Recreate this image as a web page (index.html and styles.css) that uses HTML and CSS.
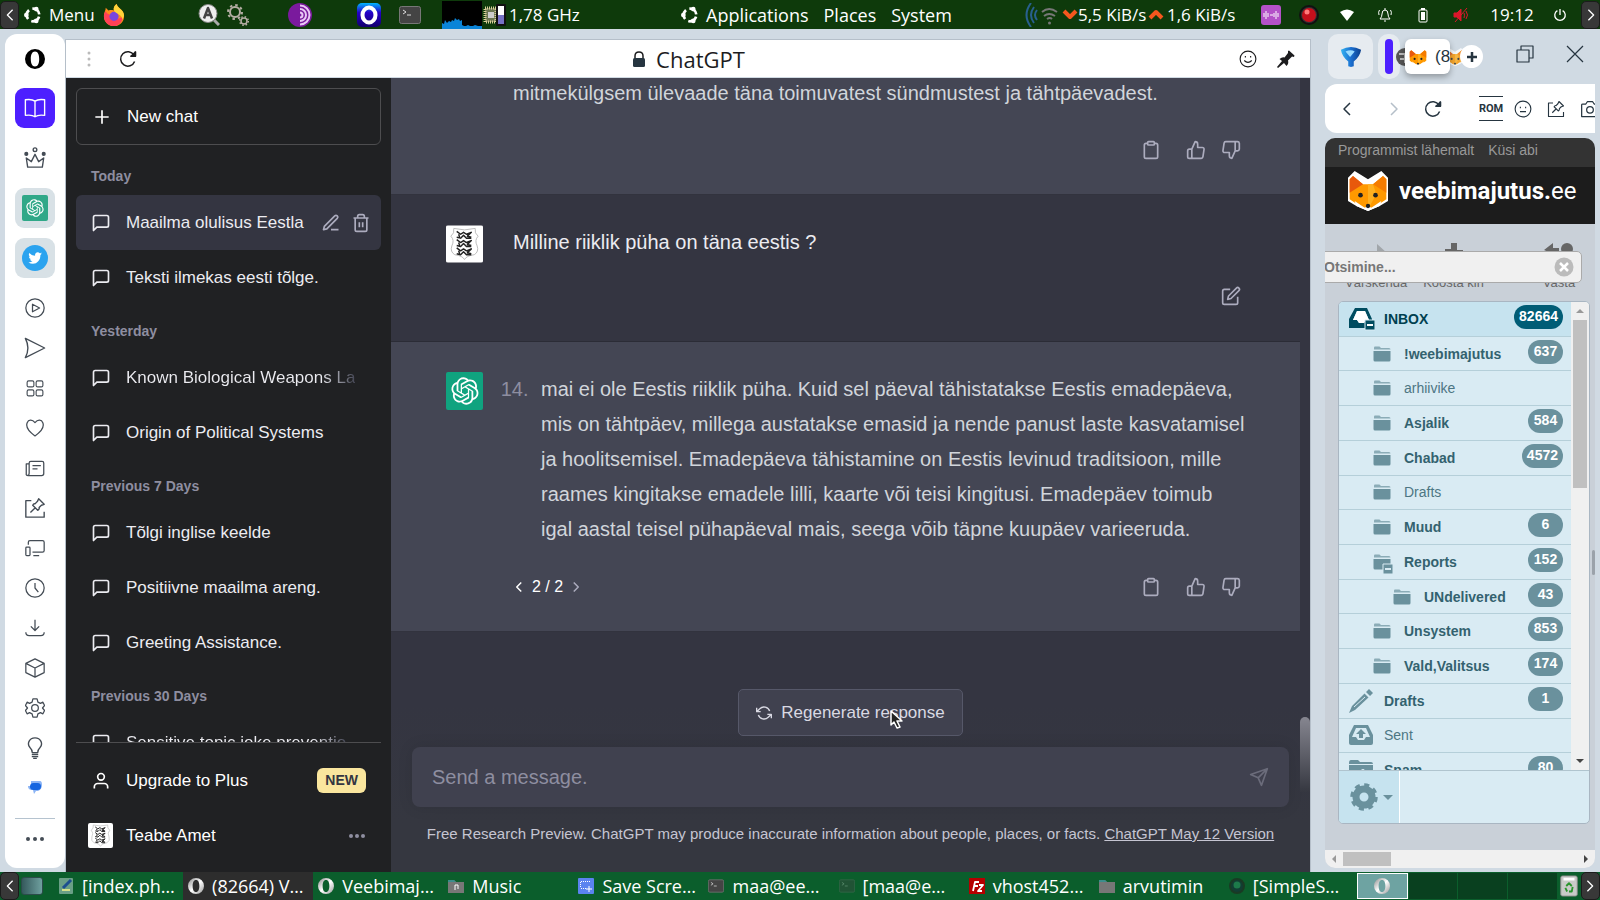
FILE: index.html
```html
<!DOCTYPE html>
<html lang="et">
	<head>
		<meta charset="UTF-8">
		<title>ChatGPT</title>
		<link rel="stylesheet" href="styles.css">
	</head>
	<body>
		<svg class="sprite" aria-hidden="true">
			<symbol id="left" viewBox="0 0 10 16"><path d="M8 2 2 8l6 6"/></symbol>
			<symbol id="right" viewBox="0 0 10 16"><path d="m2 2 6 6-6 6"/></symbol>
			<symbol id="ubuntu" viewBox="0 0 20 20"><circle cx="10" cy="10" r="7" stroke-width="3" stroke-dasharray="10.7 4" stroke-dashoffset="-2"/><g fill="#fff" stroke="none"><circle cx="2.6" cy="10" r="2.6"/><circle cx="13.6" cy="3.4" r="2.6"/><circle cx="13.6" cy="16.6" r="2.6"/></g></symbol>
			<symbol id="chat" viewBox="0 0 24 24"><path d="M21 15a2 2 0 0 1-2 2H7l-4 4V5a2 2 0 0 1 2-2h14a2 2 0 0 1 2 2z"/></symbol>
			<symbol id="clipboard" viewBox="0 0 24 24"><path d="M16 4h2a2 2 0 0 1 2 2v14a2 2 0 0 1-2 2H6a2 2 0 0 1-2-2V6a2 2 0 0 1 2-2h2"/><rect x="8" y="2" width="8" height="4" rx="1"/></symbol>
			<symbol id="up" viewBox="0 0 24 24"><path d="M14 9V5a3 3 0 0 0-3-3l-4 9v11h11.28a2 2 0 0 0 2-1.7l1.38-9a2 2 0 0 0-2-2.3zM7 22H4a2 2 0 0 1-2-2v-7a2 2 0 0 1 2-2h3"/></symbol>
			<symbol id="down" viewBox="0 0 24 24"><path d="M10 15v4a3 3 0 0 0 3 3l4-9V2H5.72a2 2 0 0 0-2 1.7l-1.38 9a2 2 0 0 0 2 2.3zm7-13h2.67A2.31 2.31 0 0 1 22 4v7a2.31 2.31 0 0 1-2.33 2H17"/></symbol>
			<symbol id="reload" viewBox="0 0 18 18"><path d="M15.6 11.5A7.2 7.2 0 1 1 15 5.2M16.4 1.6v4.6h-4.8"/><path d="M16.4 2v4.2H12z" fill="currentColor"/></symbol>
			<symbol id="pinbox" viewBox="0 0 24 24"><path d="M8 4H2v18h20v-6M7 17l5-5M9.5 9 15 14.5c2-1 1.5-3 1.5-3L19 9l3-1-6-6-1.5 3L12 7.5s-1.500-.5-2.500 1.500z"/></symbol>
			<symbol id="folder" viewBox="0 0 18 16"><path d="M1 3c0-2 0-2.500 1.500-2.500h4L8 2h8q1.500 0 1.500 1.500H1z" opacity=".7"/><path d="M.5 5h17v9q0 1.500-1.500 1.500H2Q.5 15.500.5 14z"/></symbol>
			<symbol id="opera" viewBox="0 0 20 20"><path fill-rule="evenodd" d="M10 0a10 10 0 1 0 0 20 10 10 0 0 0 0-20zM10 2.500c3 0 4.200 3.400 4.200 7.500s-1.200 7.500-4.200 7.500S5.800 14.100 5.800 10 7 2.500 10 2.500z"/></symbol>
			<symbol id="fox" viewBox="0 0 24 24"><g stroke="none"><path d="M0 4 4 0l8 5 8-5 4 4v14l-5 3-7 3-7-3-5-3z" fill="#fff"/><path d="M1 5 3 3l6 5h6l6-5 2 2v12l-6 4-5 2-5-2-6-4z" fill="#f90"/><path d="M3 3l6 5-8 5V5z" fill="#e8590c"/><path d="M12 8h3l2 6-5 9z" fill="#ffb020"/><path d="m21 3-6 5 8 5V5z" fill="#f57c00"/><circle cx="7.500" cy="14.500" r="1.400" fill="#222"/><circle cx="16.500" cy="14.500" r="1.400" fill="#222"/><path d="m4 18 6 4 2-1 2 1 6-4-1 3-7 3-7-3z" fill="#fff"/><circle cx="12" cy="21" r="1.300" fill="#222"/></g></symbol>
			<symbol id="shield" viewBox="0 0 38 38"><path d="M0 0h38v38H0z" fill="#fff" stroke="none"/><path d="M8 3q11 3 22 0-1 5 3 8-4 4-1 10 2 6-3 9-8 1-10 5-2-4-10-5-5-3-3-9 3-6-1-10 4-3 3-8z" stroke="#bbb" stroke-width="1"/><g stroke="#222" stroke-width="1.500"><path id="lion" d="m11 6 4 3 3-2 3 2 5-2-4 4 4 1m-15 0 4 1 3-3 3 3 5 0M13 9l1 3m9-4-1 4"/><use href="#lion" y="8.500"/><use href="#lion" y="17"/></g></symbol>
			<symbol id="gpt" viewBox="0 0 41 41"><path fill="currentColor" stroke="none" d="M37.532 16.8707C37.9808 15.5241 38.1363 14.0974 37.9886 12.6859C37.8409 11.2744 37.3934 9.91076 36.676 8.68622C35.6126 6.83404 33.9882 5.3676 32.0373 4.4985C30.0864 3.62941 27.9098 3.40259 25.8215 3.85078C24.8796 2.7893 23.7219 1.94125 22.4257 1.36341C21.1295 0.785575 19.7249 0.491269 18.3058 0.500197C16.1708 0.495044 14.0893 1.16803 12.3614 2.42214C10.6335 3.67624 9.34853 5.44666 8.6917 7.47815C7.30085 7.76286 5.98686 8.3414 4.8377 9.17505C3.68854 10.0087 2.73073 11.0782 2.02839 12.312C0.956464 14.1591 0.498905 16.2988 0.721698 18.4228C0.944492 20.5467 1.83612 22.5449 3.268 24.1293C2.81966 25.4759 2.66413 26.9026 2.81182 28.3141C2.95951 29.7256 3.40701 31.0892 4.12437 32.3138C5.18791 34.1659 6.8123 35.6322 8.76321 36.5013C10.7141 37.3704 12.8907 37.5973 14.9789 37.1492C15.9208 38.2107 17.0786 39.0587 18.3747 39.6366C19.6709 40.2144 21.0755 40.5087 22.4946 40.4998C24.6307 40.5054 26.7133 39.8321 28.4418 38.5772C30.1704 37.3223 31.4556 35.5506 32.1119 33.5179C33.5027 33.2332 34.8167 32.6547 35.9659 31.821C37.115 30.9874 38.0728 29.9178 38.7752 28.684C39.8458 26.8371 40.3023 24.6979 40.0789 22.5748C39.8556 20.4517 38.9639 18.4544 37.532 16.8707ZM22.4978 37.8849C20.7443 37.8874 19.0459 37.2733 17.6994 36.1501C17.7601 36.117 17.8666 36.0586 17.936 36.0161L25.9004 31.4156C26.1003 31.3019 26.2663 31.137 26.3813 30.9378C26.4964 30.7386 26.5563 30.5124 26.5549 30.2825V19.0542L29.9213 20.998C29.9389 21.0068 29.9541 21.0198 29.9656 21.0359C29.977 21.052 29.9842 21.0707 29.9867 21.0902V30.3889C29.9842 32.375 29.1946 34.2791 27.7909 35.6841C26.3872 37.0892 24.4838 37.8806 22.4978 37.8849ZM6.39227 31.0064C5.51397 29.4888 5.19742 27.7107 5.49804 25.9832C5.55718 26.0187 5.66048 26.0818 5.73461 26.1244L13.699 30.7248C13.8975 30.8408 14.1233 30.902 14.3532 30.902C14.583 30.902 14.8088 30.8408 15.0073 30.7248L24.731 25.1103V28.9979C24.7321 29.0177 24.7283 29.0376 24.7199 29.0556C24.7115 29.0736 24.6988 29.0893 24.6829 29.1012L16.6317 33.7497C14.9096 34.7416 12.8643 35.0097 10.9447 34.4954C9.02506 33.9811 7.38785 32.7263 6.39227 31.0064ZM4.29707 13.6194C5.17156 12.0998 6.55279 10.9364 8.19885 10.3327C8.19885 10.4013 8.19491 10.5228 8.19491 10.6071V19.808C8.19351 20.0378 8.25334 20.2638 8.36823 20.4629C8.48312 20.6619 8.64893 20.8267 8.84863 20.9404L18.5723 26.5542L15.206 28.4979C15.1894 28.5089 15.1703 28.5155 15.1505 28.5173C15.1307 28.5191 15.1107 28.516 15.0924 28.5082L7.04046 23.8557C5.32135 22.8601 4.06716 21.2235 3.55289 19.3046C3.03862 17.3858 3.30624 15.3413 4.29707 13.6194ZM31.955 20.0556L22.2312 14.4411L25.5976 12.4981C25.6142 12.4872 25.6333 12.4805 25.6531 12.4787C25.6729 12.4769 25.6928 12.4801 25.7111 12.4879L33.7631 17.1364C34.9967 17.849 36.0017 18.8982 36.6606 20.1613C37.3194 21.4244 37.6047 22.849 37.4832 24.2684C37.3617 25.6878 36.8382 27.0432 35.9743 28.1759C35.1103 29.3086 33.9415 30.1717 32.6047 30.6641C32.6047 30.5947 32.6047 30.4733 32.6047 30.3889V21.188C32.6066 20.9586 32.5474 20.7328 32.4332 20.5338C32.319 20.3348 32.154 20.1698 31.955 20.0556ZM35.3055 15.0128C35.2464 14.9765 35.1431 14.9142 35.069 14.8717L27.1045 10.2712C26.906 10.1554 26.6803 10.0943 26.4504 10.0943C26.2206 10.0943 25.9948 10.1554 25.7963 10.2712L16.0726 15.8858V11.9982C16.0715 11.9783 16.0753 11.9585 16.0837 11.9405C16.0921 11.9225 16.1048 11.9068 16.1207 11.8949L24.1719 7.25025C25.4053 6.53903 26.8158 6.19376 28.2383 6.25482C29.6608 6.31589 31.0364 6.78077 32.2044 7.59508C33.3723 8.40939 34.2842 9.53945 34.8334 10.8531C35.3826 12.1667 35.5464 13.6095 35.3055 15.0128ZM14.2424 21.9419L10.8752 19.9981C10.8576 19.9893 10.8423 19.9763 10.8309 19.9602C10.8195 19.9441 10.8122 19.9254 10.8098 19.9058V10.6071C10.8107 9.18295 11.2173 7.78848 11.9819 6.58696C12.7466 5.38544 13.8377 4.42659 15.1275 3.82264C16.4173 3.21869 17.8524 2.99464 19.2649 3.1767C20.6775 3.35876 22.0089 3.93941 23.1034 4.85067C23.0427 4.88379 22.937 4.94215 22.8668 4.98473L14.9024 9.58517C14.7025 9.69878 14.5366 9.86356 14.4215 10.0626C14.3065 10.2616 14.2466 10.4877 14.2479 10.7175L14.2424 21.9419ZM16.071 17.9991L20.4018 15.4978L24.7325 17.9975V22.9985L20.4018 25.4983L16.071 22.9985V17.9991Z"/></symbol>
			<symbol id="term" viewBox="0 0 22 18"><rect x=".5" y=".5" width="21" height="17" rx="2" fill="#444" stroke="#777" stroke-width="1"/><path d="m4 4 3 2-3 2m4 1h4" stroke="#ddd" stroke-width="1"/></symbol>
			<linearGradient id="chrome" x2="1" y2="1"><stop stop-color="#888"/><stop offset=".5" stop-color="#fff"/><stop offset="1" stop-color="#999"/></linearGradient>
			<linearGradient id="blue" y2="1" x2="0"><stop stop-color="#00b7ff"/><stop offset=".4" stop-color="#2500c9"/><stop offset="1" stop-color="#12006b"/></linearGradient>
			<linearGradient id="drop" x2="1"><stop stop-color="#34b4f2"/><stop offset=".5" stop-color="#1b6fd0"/><stop offset="1" stop-color="#0b3f8c"/></linearGradient>
		</svg>
		<header class="panel">
			<button class="hide" aria-label="Peida"><svg class="i10"><use href="#left"/></svg></button>
			<button class="menu"><svg class="i18"><use href="#ubuntu"/></svg>Menu</button>
			<button class="launch firefox" aria-label="Firefox"><svg class="i22" viewBox="0 0 24 24"><g stroke="none"><path d="M12 24C5 24 1 19 1 13c0-4 2-6 2-9l3 3c3-1 6 0 6 0-1-3 1-6 3-7 0 4 8 6 8 13 0 6-4 11-11 11z" fill="#ff8a1c"/><path d="M1 13c0-2 1-4 2-5 1 3 3 3 5 4 4 6 12 4 14 1-1 7-5 11-10 11C5 24 1 19 1 13z" fill="#ff4156"/><circle cx="12" cy="13.500" r="5" fill="#7a45dd"/><path d="M15 0c0 4 8 6 8 13l-2 4c0-6-7-6-9-10-1-3 1-6 3-7z" fill="#ffd43a"/></g></svg></button>
			<button class="launch search" aria-label="Otsing"><svg class="i22" viewBox="0 0 22 22"><path d="m16 16 5 5" stroke="#aaa" stroke-width="3"/><circle cx="10" cy="9.500" r="9" fill="#eee" stroke="#888" stroke-width="1"/><path d="M6 14.500 10 4l4 10.500M7.500 11h5" stroke="#444" stroke-width="2.500"/></svg></button>
			<button class="launch gears" aria-label="Seaded"><svg class="i22" viewBox="0 0 22 22" stroke="#b5aea4"><circle cx="8" cy="8" r="5" stroke-width="2"/><circle cx="8" cy="8" r="7" stroke-width="2" stroke-dasharray="2.500 3"/><circle cx="17" cy="17" r="3" stroke-width="1.500"/><circle cx="17" cy="17" r="4.300" stroke-width="1.500" stroke-dasharray="1.500 1.900"/></svg></button>
			<button class="launch tor" aria-label="Tor"><svg class="i24" viewBox="0 0 24 24" stroke="#e9c8f5"><circle cx="12" cy="12" r="12" fill="#7a1a9d" stroke="none"/><path d="M12 2.500a9.500 9.500 0 0 1 0 19M12 6a6 6 0 0 1 0 12M12 9.500a2.500 2.500 0 0 1 0 5"/></svg></button>
			<button class="launch operadev" aria-label="Opera"><svg class="i24" viewBox="0 0 24 24"><rect width="24" height="24" rx="5" fill="url(#blue)" stroke="none"/><ellipse cx="12" cy="12" rx="6.500" ry="7.500" stroke="#fff" stroke-width="4"/></svg></button>
			<button class="launch terminal" aria-label="Terminal"><svg class="i22"><use href="#term"/></svg></button>
			<svg class="graph" viewBox="0 0 40 28"><path d="M0 0h40v28H0z" fill="#000" stroke="none"/><path d="M0 28v-6l2 1 1-4 2 3 2-2 2 1 1-2 2 1 1-3 2 2 2-1 1 2 2-1v5l2 1h2l2-1 2 1h3l2-1 3 1h4v4z" fill="#0a84d8" stroke="none"/></svg>
			<span class="cpu"><svg class="i24" viewBox="0 0 24 22"><path d="M3 4h11v14H3z" fill="#6a7551" stroke="#d8cf98" stroke-dasharray="1 1" stroke-width="3"/><path d="M6 8h6v6H6z" fill="#ccc" stroke="none"/><path d="M15 1h8v20h-8z" fill="#fff" stroke="#111"/><path d="M16 11h6v9h-6z" fill="#7672c4" stroke="none"/></svg>1,78 GHz</span>
			<nav class="gnome">
				<button><svg class="i18"><use href="#ubuntu"/></svg>Applications</button>
				<button>Places</button>
				<button>System</button>
			</nav>
			<span class="spacer"></span>
			<span class="net"><svg class="waves" viewBox="0 0 38 24"><path d="M7 0q-9 12 0 24M10 4q-6 8 0 16M13 7q-4 5 0 10" stroke="#28608f" stroke-width="2"/><path d="M18 9q7-6 15 0M20 13q5-4 11 0M23 16q3-2 5 0" stroke="#777"/><circle cx="25.500" cy="20" r="1.500" fill="#777" stroke="none"/></svg><svg class="i16" viewBox="0 0 16 16" stroke="#f4571e"><path d="m2 4 6 6 6-6" stroke-width="4"/></svg><span class="rate">5,5 KiB/s</span><svg class="i16 rise" viewBox="0 0 16 16" stroke="#f4571e"><path d="m2 11 6-6 6 6" stroke-width="4"/></svg><span>1,6 KiB/s</span></span>
			<button class="tray" aria-label="Heli"><svg class="i20" viewBox="0 0 20 20"><rect width="20" height="20" rx="3" fill="#b452c8" stroke="none"/><path d="M3 8v4m2-6v8m2-6v4m2-2h3m1-2v4m2-6v8m2-6v4" stroke="#fff" stroke-width="1"/></svg></button>
			<button class="tray" aria-label="Salvesta"><svg class="i20" viewBox="0 0 20 20"><circle cx="10" cy="10" r="9" fill="#333" stroke="#111"/><circle cx="10" cy="10" r="7" fill="#c4101c" stroke="none"/><circle cx="8" cy="7" r="2.500" fill="#ff7a7a" stroke="none"/></svg></button>
			<button class="tray" aria-label="WiFi"><svg class="i16" viewBox="0 0 16 16"><path d="M1 5q7-5 14 0l-7 9z" fill="#fff" stroke="none"/></svg></button>
			<button class="tray" aria-label="Teated"><svg class="i16" viewBox="0 0 16 16" stroke-width="1"><path d="M3 12q2-2 2-5 0-4 3-4t3 4q0 3 2 5zM7 14h2M8 1v2M2.500 3Q1 5 2 8m11.500-5q1.500 2 .5 5"/></svg></button>
			<button class="tray" aria-label="Aku"><svg class="i16" viewBox="0 0 16 16"><rect x="4" y="3" width="8" height="12" rx="1" stroke-width="1"/><path d="M6 1h4v2H6zm0 4h4v8H6z" fill="#fff" stroke="none"/></svg></button>
			<button class="tray" aria-label="Vaigista"><svg class="i16" viewBox="0 0 16 16" stroke="#d9172b" stroke-width="1"><path d="M1 6h3l4-4v12l-4-4H1z" fill="#d9172b"/><path d="M14 1 2 15m9-9q1 2 0 5m2-7q3 4 0 8"/></svg></button>
			<button class="clock">19:12</button>
			<button class="power" aria-label="Välju"><svg class="i14" viewBox="0 0 16 16"><path d="M5 3a6 6 0 1 0 6 0M8 1v7" stroke-width="1.500"/></svg></button>
			<button class="hide" aria-label="Peida"><svg class="i10"><use href="#right"/></svg></button>
		</header>

		<div class="desktop">
			<aside class="opera-bar">
				<button class="logo" aria-label="Opera"><svg class="i20 solid"><use href="#opera"/></svg></button>
				<button class="tile book" aria-label="Raamat"><svg class="i22" viewBox="0 0 24 24"><path d="M12 4.500C10 3 5 2.500 1.500 3v17c3.500-.5 8.500 0 10.500 1.500 2-1.500 7-2 10.500-1.500V3C19 2.500 14 3 12 4.500zM12 4.500v17"/></svg></button>
				<button class="tile" aria-label="Kroon"><svg class="i22" viewBox="0 0 24 24"><path d="M4 22 2.500 12 8 16l4-8 4 8 5.500-4L20 22z"/><circle cx="12" cy="3" r="2"/><circle cx="2.500" cy="7.500" r="1.500" fill="currentColor"/><circle cx="21.500" cy="7.500" r="1.500" fill="currentColor"/></svg></button>
				<button class="tile app" aria-label="ChatGPT"><span class="gptbox"><svg class="i18"><use href="#gpt"/></svg></span></button>
				<button class="tile app" aria-label="Twitter"><svg class="i26" viewBox="0 0 26 26"><circle cx="13" cy="13" r="13" fill="#2ba3ef" stroke="none"/><path d="M20 8.500q-1 .4-1.600.4 1-.7 1.200-1.400-.8.5-1.800.7c-2-2-5.300-.5-4.700 2.600Q9.500 10.700 7.300 8c-.9 1.500-.3 3 .8 3.800l-1.200-.3q0 2.100 2.200 2.800l-1.200.1q.7 1.700 2.600 1.900-1.700 1.300-4.200 1.100c6.500 3.600 12.200-.8 12.100-7.400z" fill="#fff" stroke="none"/></svg></button>
				<div class="tools">
					<button aria-label="Player"><svg class="i20" viewBox="0 0 24 24"><circle cx="12" cy="12" r="11"/><path d="M9 7.500v9l8.500-4.500z"/></svg></button>
					<button aria-label="Flow"><svg class="i22" viewBox="0 0 24 24"><path d="m1.500 1.500 21 10.500-21 10.500Q7 12 1.500 1.500z"/></svg></button>
					<button aria-label="Kiirvalik"><svg class="i18" viewBox="0 0 24 24"><rect x="1.500" y="2.500" width="9" height="8" rx="2"/><rect x="13.500" y="2.500" width="9" height="8" rx="2"/><rect x="1.500" y="14.500" width="9" height="8" rx="2"/><rect x="13.500" y="14.500" width="9" height="8" rx="2"/></svg></button>
					<button aria-label="Järjehoidjad"><svg class="i20" viewBox="0 0 24 24"><path d="M12 21.500C-6 9 5-3 12 5.500 19-3 30 9 12 21.500z"/></svg></button>
					<button aria-label="Uudised"><svg class="i20" viewBox="0 0 24 24"><path d="M5 7H1.500v13Q2 21 4 21h16q2.500 0 2.500-2.500V6q0-2-2-2H7Q5 4 5 6v12q0 3-2 3M9 9h10M9 13h6"/></svg></button>
					<button aria-label="Kinnitatud"><svg class="i22"><use href="#pinbox"/></svg></button>
					<button aria-label="Seadmed"><svg class="i20" viewBox="0 0 24 24"><path d="M4 8V5q0-2 2-2h15q2 0 2 2v10q0 2-2 2H9M10 21h7"/><rect x="1" y="11" width="5" height="10" rx="1"/></svg></button>
					<button aria-label="Ajalugu"><svg class="i20" viewBox="0 0 24 24"><circle cx="12" cy="12" r="11"/><path d="M12 6v6l4 5"/></svg></button>
					<button aria-label="Allalaadimised"><svg class="i20" viewBox="0 0 24 24"><path d="M12 2v13m-5-5 5 5 5-5M1 17q0 4 4 4h14q4 0 4-4"/></svg></button>
					<button aria-label="Laiendused"><svg class="i20" viewBox="0 0 24 24"><path d="m12 1 11 5.500v11L12 23 1 17.500v-11zM1 6.500 12 12l11-5.500M12 12v11"/></svg></button>
					<button aria-label="Sätted"><svg class="i20" viewBox="0 0 24 24"><circle cx="12" cy="12" r="4"/><path d="M9.500 1h5l1 4 3 1.500 3-1.500 2 4-2.500 3 2.500 3-2 4-3-1.500-3 1.500-1 4h-5l-1-4-3-1.500-3 1.500-2-4L3 12 .5 9l2-4 3 1.500 3-1.500z"/></svg></button>
					<button aria-label="Nõuanded"><svg class="i22" viewBox="0 0 24 24"><path d="M9 17q0-3-2.500-5.500C3 7.500 5.500 1 12 1s9 6.500 5.500 10.500Q15 14 15 17zM8.500 19h7m-7 2.300h7M10 23.500h4"/></svg></button>
					<button aria-label="Sõnumid"><svg class="i14" viewBox="0 0 14 14" stroke="none"><path d="M3 0h9q2 0 2 4t-4 6H8l-2 3-1-4H4Q0 9 0 5h3z" fill="#8bb4f5"/><rect x="2" y="2" width="11" height="7" rx="3.500" fill="#1565e0"/></svg></button>
				</div>
				<button class="more" aria-label="Veel"><svg class="i20" viewBox="0 0 20 20"><g fill="currentColor" stroke="none"><circle cx="3" cy="10" r="2"/><circle cx="10" cy="10" r="2"/><circle cx="17" cy="10" r="2"/></g></svg></button>
			</aside>

			<section class="webpanel">
				<div class="titlebar">
					<button class="grip" aria-label="Liiguta"><svg class="i16" viewBox="0 0 16 16"><g fill="#bbb" stroke="none"><circle cx="8" cy="2" r="1.500"/><circle cx="8" cy="8" r="1.500"/><circle cx="8" cy="14" r="1.500"/></g></svg></button>
					<button aria-label="Laadi uuesti"><svg class="i18"><use href="#reload"/></svg></button>
					<h1><svg class="i16" viewBox="0 0 16 16"><path d="M4 8V5q0-4 4-4t4 4v3" stroke-width="1.500"/><rect x="2" y="7" width="12" height="9" rx="1.500" fill="#263540" stroke="none"/></svg>ChatGPT</h1>
					<button aria-label="Naerunägu"><svg class="i18" viewBox="0 0 24 24"><circle cx="12" cy="12" r="10.500"/><path d="M7 14q5 5 10 0M8.500 8v2m7-2v2"/></svg></button>
					<button class="pin" aria-label="Kinnita"><svg class="i18" viewBox="0 0 18 18"><path d="m0 17 5-6-2.500-2q3-2.500 5-1.500L11 3V1l1-.5 5.500 5L17 7l-2-.5-4 4q1 3-1.500 5.500L7 13l-6 5z" fill="#1c1c1e" stroke="none"/></svg></button>
				</div>
				<div class="chatgpt">
					<nav class="history">
						<button class="new"><svg class="i20" viewBox="0 0 24 24"><path d="M12 4v16M4 12h16"/></svg>New chat</button>
						<div class="chats">
							<h2>Today</h2>
							<div class="chat active"><a href="#"><svg class="i20"><use href="#chat"/></svg><span>Maailma olulisus Eestla</span></a>
								<button aria-label="Edit"><svg class="i20" viewBox="0 0 24 24"><path d="M12 20h9M16.500 3.500a2.120 2.120 0 0 1 3 3L7 19l-4 1 1-4z"/></svg></button>
								<button aria-label="Delete"><svg class="i20" viewBox="0 0 24 24"><path d="M3 6h18M19 6v14a2 2 0 0 1-2 2H7a2 2 0 0 1-2-2V6m3 0V4a2 2 0 0 1 2-2h4a2 2 0 0 1 2 2v2M10 11v6m4-6v6"/></svg></button></div>
							<div class="chat"><a href="#"><svg class="i20"><use href="#chat"/></svg><span>Teksti ilmekas eesti tõlge.</span></a></div>
							<h2>Yesterday</h2>
							<div class="chat"><a href="#"><svg class="i20"><use href="#chat"/></svg><span class="fade">Known Biological Weapons La</span></a></div>
							<div class="chat"><a href="#"><svg class="i20"><use href="#chat"/></svg><span>Origin of Political Systems</span></a></div>
							<h2>Previous 7 Days</h2>
							<div class="chat"><a href="#"><svg class="i20"><use href="#chat"/></svg><span>Tõlgi inglise keelde</span></a></div>
							<div class="chat"><a href="#"><svg class="i20"><use href="#chat"/></svg><span>Positiivne maailma areng.</span></a></div>
							<div class="chat"><a href="#"><svg class="i20"><use href="#chat"/></svg><span>Greeting Assistance.</span></a></div>
							<h2>Previous 30 Days</h2>
							<div class="chat"><a href="#"><svg class="i20"><use href="#chat"/></svg><span class="fade">Sensitive topic joke preventio</span></a></div>
						</div>
						<div class="account">
							<button class="user"><svg class="i20" viewBox="0 0 24 24"><path d="M20 21v-2a4 4 0 0 0-4-4H8a4 4 0 0 0-4 4v2"/><circle cx="12" cy="7" r="4"/></svg>Upgrade to Plus<span class="badge">NEW</span></button>
							<button class="user"><svg class="face"><use href="#shield"/></svg>Teabe Amet<svg class="i18 dots" viewBox="0 0 18 18"><g fill="#8e8ea0" stroke="none"><circle cx="3" cy="9" r="2"/><circle cx="9" cy="9" r="2"/><circle cx="15" cy="9" r="2"/></g></svg></button>
						</div>
					</nav>
					<main class="thread">
						<article class="msg bot first">
							<div class="body">
								<p>mitmekülgsem ülevaade täna toimuvatest sündmustest ja tähtpäevadest.</p>
								<div class="foot">
									<button aria-label="Copy"><svg class="i20"><use href="#clipboard"/></svg></button>
									<button class="up" aria-label="Good"><svg class="i20"><use href="#up"/></svg></button>
									<button aria-label="Bad"><svg class="i20"><use href="#down"/></svg></button>
								</div>
							</div>
						</article>
						<article class="msg human">
							<svg class="avatar"><use href="#shield"/></svg>
							<div class="body">
								<p>Milline riiklik püha on täna eestis ?</p>
								<div class="foot">
									<button aria-label="Edit"><svg class="i20" viewBox="0 0 24 24"><path d="M11 4H4a2 2 0 0 0-2 2v14a2 2 0 0 0 2 2h14a2 2 0 0 0 2-2v-7M18.500 2.500a2.120 2.120 0 0 1 3 3L12 15l-4 1 1-4z"/></svg></button>
								</div>
							</div>
						</article>
						<article class="msg bot">
							<span class="avatar green"><svg class="i28"><use href="#gpt"/></svg></span>
							<div class="body">
								<ol start="14">
									<li>mai ei ole Eestis riiklik püha. Kuid sel päeval tähistatakse Eestis emadepäeva,<br>mis on tähtpäev, millega austatakse emasid ja nende panust laste kasvatamisel<br>ja hoolitsemisel. Emadepäeva tähistamine on Eestis levinud traditsioon, mille<br>raames kingitakse emadele lilli, kaarte või teisi kingitusi. Emadepäev toimub<br>igal aastal teisel pühapäeval mais, seega võib täpne kuupäev varieeruda.</li>
								</ol>
								<div class="foot">
									<div class="pages">
										<button aria-label="Previous"><svg class="i12"><use href="#left"/></svg></button>
										<span>2 / 2</span>
										<button aria-label="Next" disabled><svg class="i12"><use href="#right"/></svg></button>
									</div>
									<button aria-label="Copy"><svg class="i20"><use href="#clipboard"/></svg></button>
									<button class="up" aria-label="Good"><svg class="i20"><use href="#up"/></svg></button>
									<button aria-label="Bad"><svg class="i20"><use href="#down"/></svg></button>
								</div>
							</div>
						</article>
						<form class="composer">
							<button type="button" class="regen"><svg class="i16" viewBox="0 0 24 24"><path d="M1 4v6h6m16 10v-6h-6M20.490 9A9 9 0 0 0 5.640 5.640L1 10m22 4-4.640 4.360A9 9 0 0 1 3.510 15"/></svg>Regenerate response
								<svg class="pointer" viewBox="0 0 13 19"><path d="M1 1v14l3-3 3 6 3-1-3-6h5z" fill="#222" stroke="#fff" stroke-width="1.500"/></svg></button>
							<div class="field">
								<input type="text" placeholder="Send a message." aria-label="Send a message.">
								<button aria-label="Send"><svg class="i20" viewBox="0 0 24 24"><path d="M22 2 11 13M22 2l-7 20-4-9-9-4z"/></svg></button>
							</div>
							<p class="note">Free Research Preview. ChatGPT may produce inaccurate information about people, places, or facts. <a href="#">ChatGPT May 12 Version</a></p>
						</form>
						<span class="thumb"></span>
					</main>
				</div>
			</section>

			<section class="browser">
				<div class="tabs">
					<button class="tab" aria-label="Sakk"><svg class="i22" viewBox="0 0 24 24"><path d="M1 4q11-6 22 0-1 7-8 13v5l-3 1-3-1v-5Q2 11 1 4z" fill="url(#drop)" stroke="none"/><path d="M6 6q6-3 10 0l-5 6z" fill="#9bdcff" stroke="none"/></svg></button>
					<button class="tab mark" aria-label="Tööruum"></button>
					<div class="strip">
						<svg class="globe" viewBox="0 0 18 18"><circle cx="9" cy="9" r="9" fill="#555" stroke="none"/><path d="M3 6h6v5H4M9 11v4" stroke="#bbb"/></svg>
						<button class="pop" aria-label="Veebimajutus"><svg class="i18"><use href="#fox"/></svg><span>(8</span></button>
						<svg class="half"><use href="#fox"/></svg>
						<button class="plus" aria-label="Uus sakk"><svg class="i12" viewBox="0 0 12 12"><path d="M6 1v10M1 6h10" stroke-width="2.500"/></svg></button>
					</div>
					<button class="win" aria-label="Taasta"><svg class="i18" viewBox="0 0 18 18"><path d="M1 5h12v12H1zM5 5V1h12v12h-4" stroke-width="1.200"/></svg></button>
					<button class="win close" aria-label="Sulge"><svg class="i18" viewBox="0 0 18 18"><path d="m1 1 16 16M17 1 1 17" stroke-width="1.200"/></svg></button>
				</div>
				<div class="toolbar">
					<button aria-label="Tagasi"><svg class="i16"><use href="#left"/></svg></button>
					<button aria-label="Edasi" disabled><svg class="i16"><use href="#right"/></svg></button>
					<button aria-label="Laadi uuesti"><svg class="i18"><use href="#reload"/></svg></button>
					<button class="rom">ROM</button>
					<button aria-label="Nägu"><svg class="i18" viewBox="0 0 24 24"><circle cx="12" cy="12" r="10.500"/><path d="M8 15.500h8M8.500 9v2m7-2v2"/></svg></button>
					<button aria-label="Kinnita"><svg class="i18"><use href="#pinbox"/></svg></button>
					<button aria-label="Pildista"><svg class="i20" viewBox="0 0 24 24"><path d="M2 7q0-1 1.500-1H7l2-3h6l2 3h4q1 0 1 1v14H2z"/><circle cx="12" cy="13" r="4"/></svg></button>
				</div>
				<div class="site">
					<div class="links"><a href="#">Programmist lähemalt</a><a href="#">Küsi abi</a></div>
					<div class="brand"><svg class="i40"><use href="#fox"/></svg><span><b>veebimajutus.</b>ee</span></div>
					<div class="actions">
						<button class="off"><svg class="i26" viewBox="0 0 26 26"><path d="M1 9h13V2l10 9-8 8z"/></svg>Värskenda</button>
						<button><svg class="i26" viewBox="0 0 26 26"><path d="M10 1h6v7h6v5H4V7h6z"/></svg>Koosta kiri</button>
						<button class="reply"><svg class="i34" viewBox="0 0 34 26"><path d="m2 8 9-7v5h6v8h-6v-2z"/><circle cx="25" cy="7" r="6"/></svg>Vasta</button>
						<label class="find"><input type="text" value="Otsimine..." aria-label="Otsimine"><button aria-label="Tühjenda"><svg class="i20" viewBox="0 0 20 20"><circle cx="10" cy="10" r="9.500" fill="#bbb"/><path d="m6 6 8 8m0-8-8 8" stroke="#fff" stroke-width="2.500"/></svg></button></label>
					</div>
					<div class="folders">
						<div class="listwrap">
							<ul>
								<li class="inbox"><svg class="i26" viewBox="0 0 26 22"><path fill-rule="evenodd" d="M6 0h12l5 11v9H0v-9zM8 3 4 12h4l2 3h5l2-3h3l-4-9z"/><path d="M8 3h8l4 9h-3l-2 3h-5l-2-3H4z" fill="#fff"/><path d="M16 12h10v10H16z" stroke="#d8ebf3"/><path d="M18 16h6v2h-6z" fill="#fff"/></svg><a href="#">INBOX</a><b>82664</b></li>
								<li class="sub"><svg class="i18"><use href="#folder"/></svg><a href="#">!weebimajutus</a><b>637</b></li>
								<li class="sub read"><svg class="i18"><use href="#folder"/></svg><a href="#">arhiivike</a></li>
								<li class="sub"><svg class="i18"><use href="#folder"/></svg><a href="#">Asjalik</a><b>584</b></li>
								<li class="sub"><svg class="i18"><use href="#folder"/></svg><a href="#">Chabad</a><b>4572</b></li>
								<li class="sub read"><svg class="i18"><use href="#folder"/></svg><a href="#">Drafts</a></li>
								<li class="sub"><svg class="i18"><use href="#folder"/></svg><a href="#">Muud</a><b>6</b></li>
								<li class="sub"><svg class="i18 over" viewBox="0 0 18 16"><use href="#folder" width="18" height="16"/><path d="M10 10h10v10H10z" stroke="#d8ebf3"/><path d="M12 14h6v2h-6z" fill="#d8ebf3"/></svg><a href="#">Reports</a><b>152</b></li>
								<li class="sub deep"><svg class="i18"><use href="#folder"/></svg><a href="#">UNdelivered</a><b>43</b></li>
								<li class="sub"><svg class="i18"><use href="#folder"/></svg><a href="#">Unsystem</a><b>853</b></li>
								<li class="sub"><svg class="i18"><use href="#folder"/></svg><a href="#">Vald,Valitsus</a><b>174</b></li>
								<li><svg class="i24" viewBox="0 0 24 24"><path d="m17 3 3-3 4 4-3 3zM15.500 4.500l4 4L6 21l-6 3 3-7z"/><path d="m5 18 11-10" stroke="#d8ebf3" stroke-width="1"/></svg><a href="#">Drafts</a><b>1</b></li>
								<li class="read"><svg class="i24" viewBox="0 0 24 20"><path d="M5 0h14l5 10v8q0 2-2 2H2q-2 0-2-2v-8z"/><path d="M7 3h10l4 9h-4l-2 3H9l-2-3H3z" fill="#d8ebf3"/><path d="m12 4 5 5h-3v4h-4V9H7z"/></svg><a href="#">Sent</a></li>
								<li><svg class="i24" viewBox="0 0 24 20"><path d="M0 3q0-3 2-3h7l2 2h11q2 0 2 2H0zM0 5h24v15H0z"/><path d="M9 18q0-6 5-8 4 2 2 8" fill="none" stroke="#d8ebf3" stroke-width="2"/></svg><a href="#">Spam</a><b>80</b></li>
							</ul>
							<div class="vscroll"><svg viewBox="0 0 18 18"><path d="m5 11 4-4 4 4z" fill="#999"/></svg><span></span><svg class="end" viewBox="0 0 18 18"><path d="m5 7 4 4 4-4z" fill="#444"/></svg></div>
						</div>
						<div class="listfoot"><button aria-label="Kaustad"><svg class="i28" viewBox="0 0 28 28"><circle cx="14" cy="14" r="8" fill="none" stroke="currentColor" stroke-width="7"/><circle cx="14" cy="14" r="12" fill="none" stroke="currentColor" stroke-width="3.500" stroke-dasharray="5 4.400"/></svg><svg class="i10" viewBox="0 0 10 10"><path d="M0 3h10L5 8z"/></svg></button></div>
					</div>
					<div class="hscroll"><svg viewBox="0 0 18 18"><path d="m11 5-4 4 4 4z" fill="#999"/></svg><span></span><svg class="end" viewBox="0 0 18 18"><path d="m7 5 4 4-4 4z" fill="#444"/></svg></div>
					<span class="handle"></span>
				</div>
			</section>
		</div>

		<footer class="taskbar">
			<button class="hide" aria-label="Peida"><svg class="i10"><use href="#left"/></svg></button>
			<button class="show" aria-label="Töölaud"></button>
			<button class="task"><svg class="i16" viewBox="0 0 16 16"><rect x="1" width="14" height="16" rx="1" fill="#6a9f86" stroke="none"/><path d="m5 10 8-8" stroke="#1d4f8f" stroke-width="3"/><path d="M4 12h8" stroke="#d5e08a"/></svg>[index.ph…</button>
			<button class="task on"><svg class="i16 steel"><use href="#opera"/></svg>(82664) V…</button>
			<button class="task"><svg class="i16 steel"><use href="#opera"/></svg>Veebimaj…</button>
			<button class="task"><svg class="i16" viewBox="0 0 16 16"><path d="M0 2h6l2 2h8v11H0z" fill="#777" stroke="none"/><path d="M0 2h6l2 2H0z" fill="#3c8d8b" stroke="none"/><path d="M7 12V7h3v4" stroke-width="1"/></svg>Music</button>
			<button class="task"><svg class="i16" viewBox="0 0 16 16"><rect width="16" height="16" rx="1" fill="#5b83ef" stroke="none"/><path d="M2.500 4v6M3 3.500h10M3 10.500h5" stroke-dasharray="1 1" stroke-width="1"/><path d="M11 8v6M8 11h6" stroke-width="1"/></svg>Save Scre…</button>
			<button class="task"><svg class="i16"><use href="#term"/></svg>maa@ee…</button>
			<button class="task"><svg class="i16 dim"><use href="#term"/></svg>[maa@e…</button>
			<button class="task"><svg class="i16" viewBox="0 0 16 16"><path d="M0 0h16v16H0z" fill="#b50000" stroke="none"/><path d="M4 13 6 4h4M5 8h4m1-1h4l-5 6h4" stroke-width="1.800"/></svg>vhost452…</button>
			<button class="task"><svg class="i16" viewBox="0 0 16 16"><path d="M0 2h6l2 2h8v11H0z" fill="#777" stroke="none"/><path d="M0 2h6l2 2H0z" fill="#3c8d8b" stroke="none"/></svg>arvutimin</button>
			<button class="task"><svg class="i16" viewBox="0 0 16 16"><circle cx="8" cy="8" r="7" fill="#123d33" stroke="#1a3a24"/><circle cx="8" cy="7" r="3.500" fill="#1d7a4a" stroke="none"/></svg>[SimpleS…</button>
			<div class="pager">
				<button class="cur" aria-label="1"><svg class="i16 steel"><use href="#opera"/></svg></button>
				<button aria-label="2"></button>
				<button aria-label="3"></button>
				<button aria-label="4"></button>
			</div>
			<button class="trash" aria-label="Prügikast"><svg class="i22" viewBox="0 0 20 24"><rect x="1" y="1" width="18" height="22" rx="2" fill="#c9cbc9" stroke="#888" stroke-width="1"/><path d="M4 3h12v3H4z" fill="#fff" stroke="none"/><path d="m7 12 3-3 3 3m1 1-1 5h-3m-2 0-2-4" stroke="#2a962d" stroke-width="2"/></svg></button>
			<button class="hide" aria-label="Peida"><svg class="i10"><use href="#right"/></svg></button>
		</footer>
	</body>
</html>
```
FILE: styles.css
```css
*{
	margin: 0;
	padding: 0;
	box-sizing: border-box;
}
body{
	height: 100vh;
	display: flex;
	flex-direction: column;
	overflow: hidden;
	background: #d0dae3;
	font-family: "Liberation Sans", Arial, sans-serif;
	font-size: 17px;
	fill: none;
	stroke: currentColor;
	stroke-width: 2;
	stroke-linejoin: round;
}
button, input{
	font: inherit;
	color: inherit;
	background: none;
	border: 0;
}
button{
	display: flex;
	align-items: center;
	justify-content: center;
	white-space: nowrap;
}
a{
	color: inherit;
}
ul, ol{
	list-style: none;
}
svg{
	flex: none;
}
.sprite{
	position: absolute;
	width: 0;
	height: 0;
}
.i10{ width: 10px; height: 14px; }
.i12{ width: 12px; height: 12px; }
.i14{ width: 14px; height: 14px; }
.i16{ width: 16px; height: 16px; }
.i18{ width: 18px; height: 18px; }
.i20{ width: 20px; height: 20px; }
.i22{ width: 22px; height: 22px; }
.i24{ width: 24px; height: 24px; }
.i26{ width: 26px; height: 26px; }
.i28{ width: 28px; height: 28px; }
.i34{ width: 34px; height: 26px; }
.i40{ width: 40px; height: 40px; }
.solid{
	fill: currentColor;
	stroke: none;
}
.steel{
	fill: url(#chrome);
	stroke: none;
}
.dim{
	opacity: .4;
}

/* top and bottom desktop panels */
.panel, .taskbar{
	display: flex;
	align-items: center;
	flex: none;
	color: #fff;
	font-family: "Open Sans", "Noto Sans", sans-serif;
	font-size: 17px;
	white-space: nowrap;
}
.panel{
	height: 29px;
	background: #0e3a0b;
}
.hide{
	width: 19px;
	height: 28px;
	flex: none;
	border: 1px solid #1c1c1c;
	border-radius: 5px;
	background: #383838;
	stroke-width: 1.5;
}
.menu{
	width: 84px;
	justify-content: flex-start;
	gap: 7px;
	padding-left: 5px;
}
.launch{
	justify-content: flex-start;
}
.firefox{ width: 95px; }
.search{ width: 29px; }
.gears{ width: 61px; }
.tor{ width: 69px; }
.operadev{ width: 42px; }
.terminal{ width: 43px; }
.graph{
	width: 40px;
	height: 28px;
}
.cpu{
	display: flex;
	align-items: center;
	gap: 3px;
	width: 199px;
}
.gnome{
	display: flex;
	gap: 15px;
	font-size: 18px;
}
.gnome button{
	gap: 7px;
}
.spacer{
	flex: 1;
}
.net{
	display: flex;
	align-items: center;
	width: 228px;
}
.rate{
	width: 70px;
}
.rise{
	margin-right: 3px;
}
.waves{
	width: 38px;
	height: 24px;
}
.tray{
	width: 38px;
}
.clock{
	width: 64px;
}
.power{
	width: 32px;
	margin-right: 5px;
}

.desktop{
	flex: 1;
	min-height: 0;
	display: flex;
}

/* opera sidebar */
.opera-bar{
	width: 60px;
	margin: 5px 0 4px 5px;
	padding-top: 5px;
	flex: none;
	display: flex;
	flex-direction: column;
	align-items: center;
	background: #fff;
	border-radius: 12px;
	color: #444c55;
	stroke-width: 1.5;
}
.logo{
	width: 40px;
	height: 40px;
	margin-bottom: 9px;
	color: #000;
}
.tile{
	width: 40px;
	height: 40px;
	margin-bottom: 10px;
	border-radius: 9px;
}
.book{
	background: #4d1fff;
	color: #fff;
}
.app{
	background: #d8e1e6;
}
.gptbox{
	display: flex;
	padding: 4px;
	border-radius: 2px;
	background: #30a888;
	color: #fff;
}
.tools{
	width: 40px;
	padding-bottom: 10px;
	border-bottom: 1px solid #b5c3cf;
}
.tools button{
	width: 40px;
	height: 40px;
}
.more{
	height: 40px;
}

/* side panel holding the chat */
.webpanel{
	flex: 1;
	min-width: 0;
	margin-top: 10px;
	display: flex;
	flex-direction: column;
	border: 1px solid #b5bfc9;
	border-bottom: 0;
}
.titlebar{
	height: 38px;
	flex: none;
	display: flex;
	align-items: center;
	gap: 20px;
	padding: 0 15px;
	background: #fff;
	border-bottom: 1px solid #d0dae3;
	color: #1c1c1e;
	stroke-width: 1.5;
}
.titlebar h1{
	flex: 1;
	display: flex;
	align-items: center;
	justify-content: center;
	gap: 9px;
	font: 22px "Open Sans", "Noto Sans", sans-serif;
}
.grip{
	margin-right: 2px;
}
.chatgpt{
	flex: 1;
	min-height: 0;
	display: flex;
	background: #343541;
}
.history{
	width: 325px;
	flex: none;
	display: flex;
	flex-direction: column;
	padding: 10px;
	padding-bottom: 0;
	background: #202123;
	color: #fff;
}
.new{
	height: 57px;
	flex: none;
	justify-content: flex-start;
	gap: 15px;
	margin-bottom: 5px;
	padding: 0 15px;
	border: 1px solid #4d4d4f;
	border-radius: 6px;
}
.chats{
	flex: 1;
	min-height: 0;
	overflow: hidden;
}
.chats h2{
	height: 45px;
	padding: 16px 15px 0;
	line-height: 20px;
	font-size: 14px;
	font-weight: bold;
	color: #8e8ea0;
}
.chat{
	height: 55px;
	display: flex;
	align-items: center;
	gap: 10px;
	padding: 0 10px 0 15px;
	border-radius: 6px;
	color: #ececf1;
}
.chat a{
	flex: 1;
	display: flex;
	align-items: center;
	gap: 15px;
	text-decoration: none;
	white-space: nowrap;
}
.chat button{
	color: #acacbe;
}
.active{
	background: #343541;
}
.fade{
	background: linear-gradient(to right, #ececf1 85%, #444654);
	background-clip: text;
	color: transparent;
}
.account{
	padding: 10px 0 9px;
	border-top: 1px solid #4d4d4f;
}
.user{
	width: 100%;
	height: 55px;
	justify-content: flex-start;
	gap: 15px;
	padding: 0 15px;
}
.face{
	width: 25px;
	height: 25px;
	margin: 0 -2px 0 -3px;
	border-radius: 2px;
}
.badge{
	margin-left: auto;
	padding: 0 8px;
	line-height: 25px;
	border-radius: 6px;
	background: #fae69e;
	color: #343541;
	font-size: 14px;
	font-weight: bold;
}
.dots{
	margin-left: auto;
}

/* conversation */
.thread{
	flex: 1;
	min-width: 0;
	position: relative;
	display: flex;
	flex-direction: column;
	font-size: 20px;
}
.msg{
	display: flex;
	gap: 30px;
	margin-right: 10px;
	padding: 30px 59px 34px 55px;
	line-height: 35px;
	border-bottom: 1px solid #32333e;
}
.first{
	padding: 0 59px 34px 122px;
	line-height: 30px;
}
.bot{
	background: #444654;
	color: #d1d5db;
}
.human{
	padding-bottom: 35px;
	border-bottom-color: #2b2c36;
	color: #ececf1;
}
.avatar{
	width: 37px;
	height: 38px;
	flex: none;
	border-radius: 2px;
}
.green{
	display: flex;
	align-items: center;
	justify-content: center;
	background: #10a37f;
	color: #fff;
}
.body{
	flex: 1;
	min-width: 0;
}
.foot{
	display: flex;
	align-items: center;
	justify-content: flex-end;
	gap: 15px;
	padding-top: 30px;
	color: #acacbe;
}
.first .foot{
	padding-top: 32px;
}
.human .foot{
	padding-top: 26px;
}
.foot .up{
	margin-left: 10px;
}
.body ol{
	list-style: decimal;
	padding-left: 21px;
	white-space: nowrap;
}
.body li{
	padding-left: 7px;
}
.body li::marker{
	color: #8e8ea0;
}
.pages{
	display: flex;
	align-items: center;
	gap: 7px;
	margin-right: auto;
	font-size: 16px;
	line-height: 20px;
	color: #fff;
}
.pages :disabled{
	color: #acacbe;
}
.composer{
	flex: 1;
	display: flex;
	flex-direction: column;
	align-items: center;
	padding: 57px 21px 0;
	background: linear-gradient(#343541, #343541 30%, #353740 80%);
}
.regen{
	position: relative;
	height: 47px;
	gap: 9px;
	padding: 0 17px;
	border: 1px solid #565869;
	border-radius: 5px;
	background: #40414f;
	color: #d9d9e3;
	font-size: 17px;
}
.pointer{
	position: absolute;
	left: 151px;
	top: 20px;
	width: 13px;
	height: 19px;
}
.field{
	width: 100%;
	height: 60px;
	margin: 11px 0 14px;
	display: flex;
	align-items: center;
	padding: 0 20px;
	border-radius: 8px;
	background: #40414f;
	box-shadow: 0 0 15px rgba(0,0,0,.1);
}
.field input{
	flex: 1;
	outline: 0;
}
.field input::placeholder{
	color: #8e8ea0;
	opacity: 1;
}
.field button{
	color: #6b6c7b;
}
.note{
	font-size: 15px;
	line-height: 25px;
	color: #c5c5d2;
	white-space: nowrap;
}
.thumb{
	position: absolute;
	right: 0;
	bottom: 80px;
	width: 10px;
	height: 75px;
	border-radius: 5px 5px 0 0;
	background: linear-gradient(#868690, #353740);
}

/* main browser window */
.browser{
	width: 289px;
	flex: none;
	display: flex;
	flex-direction: column;
	padding: 5px 5px 4px 14px;
}
.tabs{
	display: flex;
	align-items: center;
	gap: 5px;
	height: 45px;
	padding-left: 3px;
	color: #263540;
}
.tab{
	width: 45px;
	height: 45px;
	flex: none;
	border-radius: 10px;
	background: #e6ebf0;
}
.mark{
	width: 22px;
}
.mark::before{
	content: "";
	width: 8px;
	height: 35px;
	border-radius: 4px;
	background: #4d1fff;
}
.strip{
	flex: 1;
	min-width: 0;
	display: flex;
	align-items: center;
}
.globe{
	width: 18px;
	height: 18px;
	margin: 0 -9px;
}
.pop{
	z-index: 1;
	width: 40px;
	height: 35px;
	flex: none;
	gap: 8px;
	padding-left: 4px;
	overflow: hidden;
	justify-content: flex-start;
	border-radius: 6px;
	background: #fff;
	box-shadow: 0 3px 6px rgba(0,0,0,.3);
}
.strip .pop{
	width: 45px;
}
.half{
	width: 18px;
	height: 18px;
	margin: 0 -4px;
	opacity: .8;
}
.plus{
	z-index: 1;
	width: 23px;
	height: 23px;
	flex: none;
	border-radius: 12px;
	background: #fff;
}
.win{
	width: 40px;
	flex: none;
	margin-top: -6px;
}
.close{
	margin-left: 5px;
}
.toolbar{
	display: flex;
	align-items: center;
	height: 49px;
	margin: 5px 0;
	padding-left: 14px;
	overflow: hidden;
	background: #fff;
	border-radius: 12px 0 0 12px;
	color: #263540;
	stroke-width: 1.5;
}
.toolbar button{
	width: 33px;
	flex: none;
	justify-content: flex-start;
}
.toolbar button:nth-child(1){
	width: 47px;
}
.toolbar button:nth-child(2){
	width: 38px;
}
.toolbar button:nth-child(3){
	width: 55px;
}
.toolbar :disabled{
	color: #b5bfc9;
}
.toolbar .rom{
	justify-content: center;
	width: 24px;
	margin-right: 11px;
	padding: 5px 0;
	border: solid #263540;
	border-width: 1px 0;
	font: bold 11px Roboto, sans-serif;
}
.site{
	flex: 1;
	min-height: 0;
	position: relative;
	display: flex;
	flex-direction: column;
	overflow: hidden;
	border-radius: 10px;
	background: #c9d0d8;
	font-size: 14px;
	fill: currentColor;
	stroke: none;
	stroke-width: 1;
}
.links{
	display: flex;
	gap: 14px;
	height: 29px;
	padding: 0 13px;
	line-height: 25px;
	background: #333;
	color: #999;
}
.links a{
	text-decoration: none;
}
.brand{
	display: flex;
	align-items: center;
	gap: 11px;
	height: 57px;
	padding: 0 0 10px 23px;
	background: #1c1c1c;
	color: #fff;
	font: 24px Roboto, sans-serif;
}
.brand b{
	font-weight: bold;
}
.actions{
	position: relative;
	display: flex;
	align-items: flex-start;
	height: 77px;
	padding: 18px 19px 0 20px;
	gap: 16px;
	color: #666;
	font-size: 13px;
	flex: none;
}
.actions > button{
	flex-direction: column;
	gap: 7px;
	line-height: 16px;
}
.off svg{
	opacity: .4;
}
.actions .reply{
	margin-left: auto;
}
.find{
	position: absolute;
	left: -6px;
	right: 13px;
	top: 27px;
	height: 32px;
	display: flex;
	align-items: center;
	padding: 0 7px 0 4px;
	border: 1px solid #aaa;
	border-radius: 5px;
	background: #f0f0f0;
	color: #777;
	font-size: 14px;
	font-weight: bold;
}
.find input{
	flex: 1;
	min-width: 0;
}
.folders{
	flex: 1;
	min-height: 0;
	display: flex;
	flex-direction: column;
	margin: 0 5px 26px 13px;
	border: 1px solid #a9b6c2;
	border-radius: 5px;
	overflow: hidden;
	background: #d9ebf3;
}
.listwrap{
	flex: 1;
	min-height: 0;
	display: flex;
	overflow: hidden;
}
.folders ul{
	flex: 1;
	height: 486px;
	display: grid;
	grid-auto-rows: 1fr;
}
.folders li{
	display: flex;
	align-items: center;
	padding: 0 8px 0 10px;
	border-bottom: 1px solid #b5cfd9;
	color: #6a919d;
}
.folders a{
	flex: 1;
	margin-left: 11px;
	text-decoration: none;
	font-weight: bold;
	color: #33626f;
}
.folders .inbox{
	background: #c6e3ef;
	color: #004c60;
}
.inbox svg{
	margin-right: -2px;
}
.inbox a{
	color: #003f50;
}
.folders .sub{
	padding-left: 34px;
}
.folders .deep{
	padding-left: 54px;
}
.sub a{
	margin-left: 13px;
}
.folders .read a{
	font-weight: normal;
	color: #4d7683;
}
.over{
	overflow: visible;
}
.folders b{
	min-width: 35px;
	height: 24px;
	margin-bottom: 4px;
	padding: 0 5px;
	border-radius: 12px;
	line-height: 23px;
	text-align: center;
	background: #6a919d;
	color: #fff;
}
.inbox b{
	background: #005d76;
}
.vscroll, .hscroll{
	display: flex;
	background: #f0f0f0;
	flex: none;
}
.vscroll{
	flex-direction: column;
	width: 18px;
}
.vscroll span{
	height: 168px;
	margin: 0 2px;
	background: #c0c0c0;
}
.vscroll svg, .hscroll svg{
	width: 18px;
	height: 18px;
}
.vscroll .end{
	margin-top: auto;
}
.hscroll .end{
	margin-left: auto;
}
.hscroll span{
	width: 48px;
	margin: 2px 0;
	background: #c0c0c0;
}
.listfoot{
	height: 53px;
	flex: none;
	display: flex;
	border-top: 1px solid #b0c4ce;
}
.listfoot button{
	width: 61px;
	gap: 5px;
	padding-left: 4px;
	border-right: 1px solid #fff;
	background: #c6e3ef;
	color: #6a919d;
}
.handle{
	position: absolute;
	right: 0;
	top: 412px;
	width: 3px;
	height: 25px;
	border-radius: 2px;
	background: #9ba2aa;
}

.taskbar{
	height: 28px;
	background: #0b5e2c;
	font-size: 18px;
}
.show{
	width: 22px;
	height: 18px;
	margin: 0 10px 0 2px;
	flex: none;
	border: 1px solid #2c4c4a;
	border-radius: 3px;
	background: linear-gradient(to right, #35595c, #6fa09f);
}
.task{
	flex: 1;
	min-width: 0;
	height: 28px;
	justify-content: flex-start;
	gap: 8px;
	padding-left: 5px;
}
.on{
	background: #2d2d2d;
}
.pager{
	display: flex;
	width: 200px;
	height: 26px;
	gap: 1px;
	margin-left: 3px;
	flex: none;
}
.pager button{
	flex: 1;
	background: #09401f;
}
.pager .cur{
	border: 1px solid #fff;
	background: #6ea3a2;
}
.trash{
	width: 24px;
	flex: none;
}
```
